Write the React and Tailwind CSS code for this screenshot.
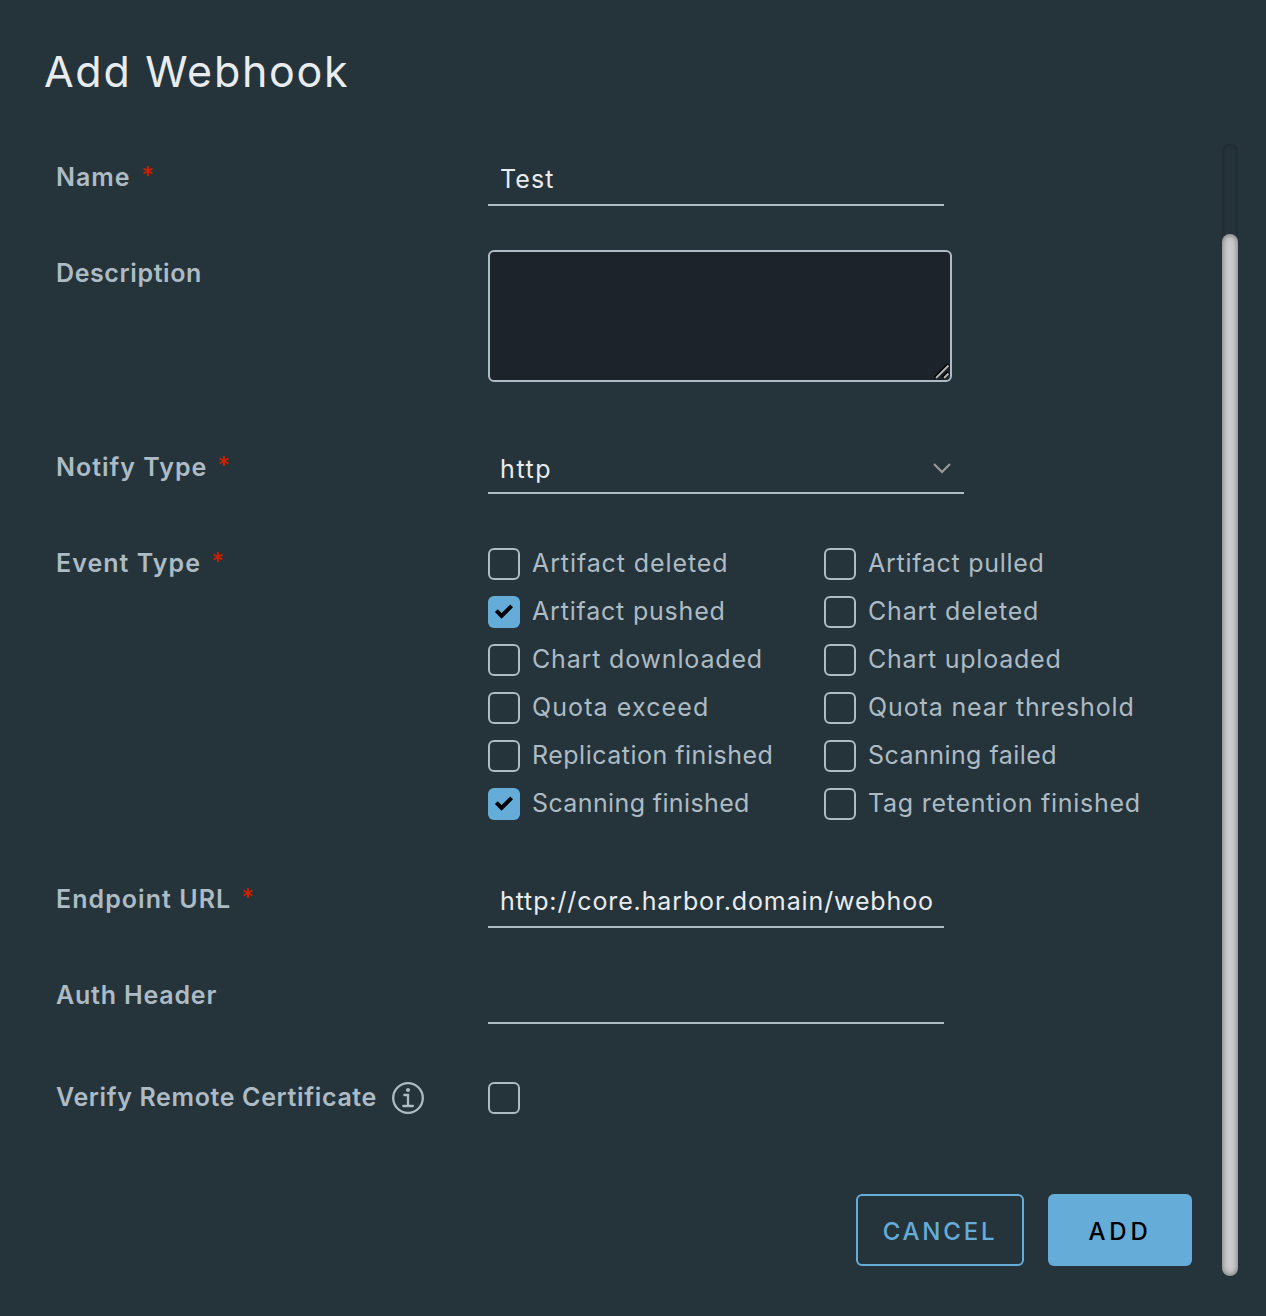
import React from "react";

function Row({ label, required, height, labelTracking, starGap, icon, children }) {
  return (
    <div className={`flex ${height}`}>
      <div className="flex h-[46px] w-[432px] shrink-0 items-center text-[25px] font-semibold text-[#adbbc4]">
        <span className={`pt-[2px] whitespace-nowrap ${labelTracking}`}>{label}</span>
        {required && (
          <svg className={`-mt-3 size-[10px] shrink-0 ${starGap}`} viewBox="0 0 10 10" stroke="#c92100" strokeWidth="2">
            <path d="M5 0v10M0.6 2.5l8.8 5M0.6 7.5l8.8-5" />
          </svg>
        )}
        {icon}
      </div>
      {children}
    </div>
  );
}

function Field({ width, height, children }) {
  return (
    <div className={`flex items-center border-b-2 border-[#adbbc4] px-3 pt-[2px] text-[25px] text-[#e9ecef] ${width} ${height}`}>
      {children}
    </div>
  );
}

function Box({ checked }) {
  return checked ? (
    <span className="flex size-8 shrink-0 items-center justify-center rounded-[6px] bg-[#65acd8]">
      <svg className="size-8" viewBox="0 0 32 32" fill="none" stroke="#000" strokeWidth="4">
        <path d="M8.3 14.6l5.3 5.3L23.6 9.9" />
      </svg>
    </span>
  ) : (
    <span className="block size-8 shrink-0 rounded-[6px] border-2 border-[#adbbc4]" />
  );
}

const events = [
  ["Artifact deleted", "tracking-[0.9px]", false],
  ["Artifact pulled", "tracking-[0.72px]", false],
  ["Artifact pushed", "tracking-[0.8px]", true],
  ["Chart deleted", "tracking-[0.83px]", false],
  ["Chart downloaded", "tracking-[0.83px]", false],
  ["Chart uploaded", "tracking-[0.77px]", false],
  ["Quota exceed", "tracking-[1.1px]", false],
  ["Quota near threshold", "tracking-[0.87px]", false],
  ["Replication finished", "tracking-[0.5px]", false],
  ["Scanning failed", "tracking-[0.45px]", false],
  ["Scanning finished", "tracking-[0.38px]", true],
  ["Tag retention finished", "tracking-[0.74px]", false],
];

export default function App() {
  return (
    <div className="flex h-[1316px] w-[1266px] overflow-hidden bg-[#25333a] font-['Inter',sans-serif]">
      <div className="flex w-[1222px] shrink-0 flex-col">
        <h1 className="h-[154px] pt-[45px] pl-11 text-[43px] leading-[52px] font-normal whitespace-nowrap text-[#e9ecef]">
          <span className="tracking-[1.7px]">Add Webhook</span>
        </h1>
        <div className="flex h-[1040px] flex-col pl-14">
          <Row label="Name" required height="h-24" labelTracking="tracking-[1px]" starGap="ml-3">
            <Field width="w-[456px]" height="h-[52px]"><span className="tracking-[1.1px]">Test</span></Field>
          </Row>
          <Row label="Description" height="h-[194px]" labelTracking="tracking-[0.6px]">
            <div className="flex h-[132px] w-[464px] items-end justify-end rounded-[6px] border-2 border-[#adbbc4] bg-[#1c232a]">
              <svg className="size-4" viewBox="0 0 16 16" fill="none">
                <path d="M1 14L14.5 0.5M9 14l5.5-5.5" stroke="#000" strokeWidth="3.5" />
                <path d="M2 14L14.5 1.5M10 14L14.5 9.5" stroke="#b8b8b8" strokeWidth="1.8" />
              </svg>
            </div>
          </Row>
          <Row label="Notify Type" required height="h-24" labelTracking="tracking-[1px]" starGap="ml-3">
            <Field width="w-[476px]" height="h-[50px]">
              <span className="pt-px tracking-[1.6px]">http</span>
              <svg className="ml-auto h-5 w-5" viewBox="0 0 20 20" fill="none" stroke="#9a9a9a" strokeWidth="2.2">
                <path d="M2 5l8 8 8-8" />
              </svg>
            </Field>
          </Row>
          <Row label="Event Type" required height="h-[336px]" labelTracking="tracking-[1.05px]" starGap="ml-3">
            <div className="grid h-[280px] grid-cols-[336px_336px] content-start gap-y-4 pt-2">
              {events.map(([name, tracking, checked]) => (
                <div key={name} className="flex h-8 items-center gap-3 text-[25px] text-[#adbbc4]">
                  <Box checked={checked} />
                  <span className={`whitespace-nowrap ${tracking}`}>{name}</span>
                </div>
              ))}
            </div>
          </Row>
          <Row label="Endpoint URL" required height="h-24" labelTracking="tracking-[1.05px]" starGap="ml-3">
            <Field width="w-[456px]" height="h-[52px]"><span className="tracking-[0.88px]">http://core.harbor.domain/webhoo</span></Field>
          </Row>
          <Row label="Auth Header" height="h-[102px]" labelTracking="tracking-[0.8px]">
            <Field width="w-[456px]" height="h-[52px]" />
          </Row>
          <Row
            label="Verify Remote Certificate"
            height="h-24"
            labelTracking="tracking-[0.64px]"
            icon={
              <svg className="mt-[2px] ml-[15px] size-8 shrink-0" viewBox="0 0 32 32" fill="none" stroke="#adbbc4" strokeWidth="2.3">
                <circle cx="16" cy="16" r="14.8" />
                <circle cx="16" cy="8" r="2.1" fill="#adbbc4" stroke="none" />
                <path d="M12.3 13H16v11M11.3 24h9.6" strokeLinecap="round" />
              </svg>
            }
          >
            <div className="pt-2"><Box /></div>
          </Row>
        </div>
        <div className="flex justify-end gap-6 pr-[30px] text-[24px] font-medium">
          <button className="flex h-[72px] w-[168px] items-center justify-center rounded-[6px] border-2 border-[#65acd8] pt-[4px] text-[#65acd8]"><span className="tracking-[2.8px]">CANCEL</span></button>
          <button className="flex h-[72px] w-36 items-center justify-center rounded-[6px] bg-[#65acd8] pt-[4px] text-black"><span className="tracking-[3.8px]">ADD</span></button>
        </div>
      </div>
      <div className="mt-36 flex h-[1132px] w-4 flex-col justify-end rounded-full bg-[#25333a] shadow-[inset_0_0_4px_rgba(0,0,0,0.3)]">
        <div className="h-[1042px] rounded-full bg-[#cccccc] shadow-[inset_0_0_6px_rgba(0,0,0,0.5)]" />
      </div>
    </div>
  );
}
